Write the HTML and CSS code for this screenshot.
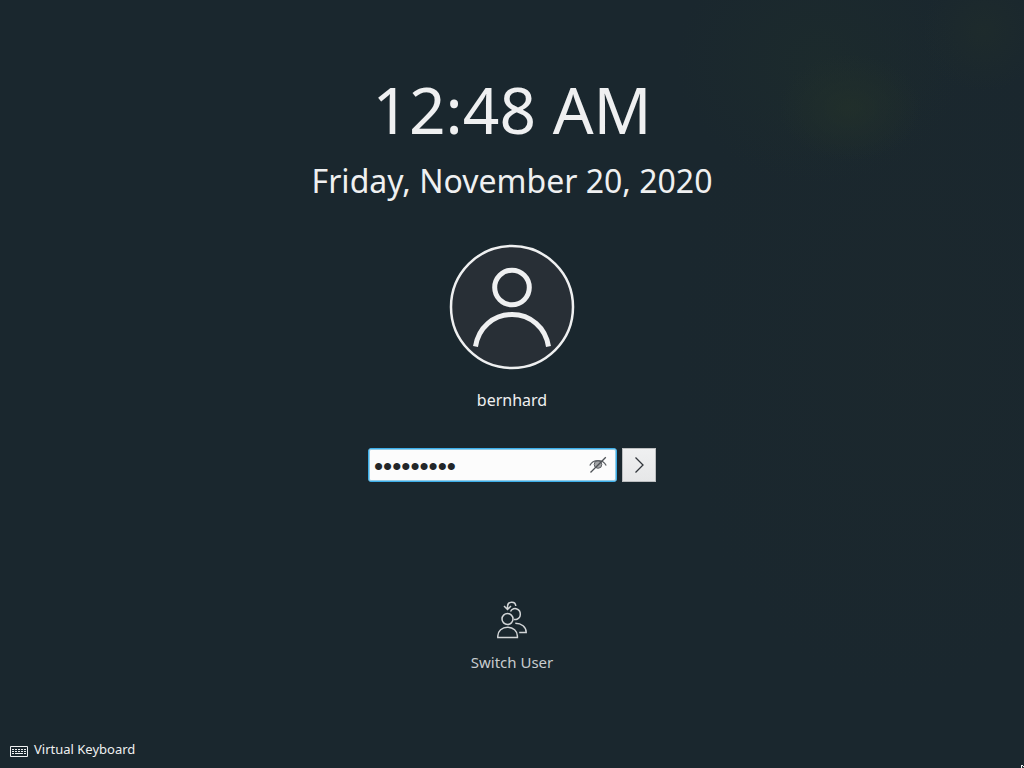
FILE: index.html
```html
<!DOCTYPE html>
<html lang="en">
<head>
<meta charset="utf-8">
<title>Lock Screen</title>
<meta name="viewport" content="width=device-width, initial-scale=1">
<link rel="stylesheet" href="styles.css">
</head>
<body>
<div class="screen">
  <main class="content">
    <header class="clock">
      <h1 class="time">12:48 AM</h1>
      <p class="date">Friday, November 20, 2020</p>
    </header>
    <section class="user">
      <svg class="avatar" viewBox="0 0 126 126" fill="none" stroke="#eff0f1" aria-hidden="true">
        <circle cx="63" cy="63" r="61" fill="#282f36" stroke-width="2.5"/>
        <circle cx="63" cy="43.500" r="17.300" stroke-width="5"/>
        <path d="M26.500 102.500C29.500 83.500 44.500 70.500 63 70.500s33.500 13 36.500 32" stroke-width="5"/>
      </svg>
      <label class="name" for="password">bernhard</label>
    </section>
    <form class="login">
      <div class="field">
        <input class="password" id="password" type="password" value="password1">
        <button class="reveal" type="button" aria-label="Show password">
          <svg class="eye" viewBox="0 0 18 18" fill="none" aria-hidden="true">
            <circle cx="9" cy="8.500" r="3.800" fill="#a3a5a7" stroke="#5c6064"/>
            <path d="M.8 9.500C2.500 6.300 5.500 4.700 9 4.700s6.500 1.600 8.200 4.800" stroke="#5c6064" stroke-width="1.300"/>
            <path d="M1.500 16.500 16.800 1.200" stroke="#4d5155" stroke-width="1.300"/>
          </svg>
        </button>
      </div>
      <button class="unlock" type="button" aria-label="Unlock">
        <svg class="chevron" viewBox="0 0 20 20" fill="none" stroke="#31363b" stroke-width="1.300" aria-hidden="true">
          <path d="M6.500 2.500 14 10l-7.500 7.500"/>
        </svg>
      </button>
    </form>
    <button class="switch" type="button">
      <svg class="people" viewBox="0 0 32 38" fill="none" stroke="#d2d5d7" stroke-width="1.500" aria-hidden="true">
        <circle cx="11.500" cy="18" r="5.500"/>
        <path d="M1.800 36.500v-1.500c0-5 4.200-8.800 9.800-8.800s9.800 3.800 9.800 8.800v1.500z"/>
        <path d="M14.500 10.500C16 7.500 19 7 21 8c4.500 2 4.300 8.500 0 10.200-1 .4-2 .5-3.200.2"/>
        <path d="M19.300 22.200c6.200 0 10.900 3.800 10.900 9.200h-7"/>
        <path d="M19.800 5c-.5-5.200-8.300-4.700-8.300.5v2.800M8 5l3.500 3.500L15 5"/>
      </svg>
      <span>Switch User</span>
    </button>
  </main>
  <footer class="footer">
    <button class="keyboard" type="button">
      <svg class="keys" viewBox="0 0 18 12" fill="none" stroke="#eff0f1" aria-hidden="true">
        <path d="M.5.500h17v10H.5z"/>
        <path d="M2 3.500h14M2 5.500h14" stroke-dasharray="2 1"/>
        <path d="M2 7.500h2M5 7.500h8M14 7.500h2"/>
      </svg>
      <span>Virtual Keyboard</span>
    </button>
  </footer>
  <svg class="pointer" viewBox="0 0 3 3" aria-hidden="true">
    <path d="M0 0h2v1h1v2H0z" fill="#eff0f1"/><path d="M1 1h1v1h1v1H1z" fill="#31363b"/>
  </svg>
</div>
</body>
</html>
```
FILE: styles.css
```css
* {
  box-sizing: border-box;
}

body {
  margin: 0;
  font-family: "Noto Sans", sans-serif;
  color: #eff0f1;
  background-color: #1a272e;
}

button {
  margin: 0;
  padding: 0;
  border: 0;
  background: none;
  color: inherit;
  font-family: inherit;
}

svg {
  display: block;
}

.screen {
  position: relative;
  display: flex;
  flex-direction: column;
  min-height: 100vh;
  background-image:
    radial-gradient(ellipse 7% 7% at 83% 14%, rgba(35, 49, 42, 0.7), transparent),
    radial-gradient(ellipse 14% 16% at 80% 8%, rgba(29, 44, 44, 0.7), transparent),
    radial-gradient(ellipse 6% 8% at 96% 4%, rgba(31, 44, 43, 0.7), transparent),
    radial-gradient(ellipse 22% 45% at 88% 46%, rgba(28, 40, 45, 0.7), transparent);
}

.content {
  display: flex;
  flex-direction: column;
  align-items: center;
  padding-top: 66px;
}

.clock {
  display: flex;
  flex-direction: column;
  gap: 6px;
  text-align: center;
}

.time,
.date {
  margin: 0;
  font-weight: 400;
}

.time {
  font-size: 64px;
  line-height: 87px;
}

.date {
  font-size: 32px;
  line-height: 44px;
}

.user {
  display: flex;
  flex-direction: column;
  align-items: center;
  gap: 19px;
  margin-top: 41px;
}

.avatar {
  width: 126px;
  height: 126px;
}

.name {
  font-size: 16px;
  line-height: 22px;
}

.login {
  display: flex;
  gap: 5px;
  margin-top: 37px;
}

.field {
  display: flex;
  align-items: center;
  width: 249px;
  height: 34px;
  padding-right: 9px;
  border: 1px solid #3daee9;
  border-radius: 3px;
  background: #fcfcfc;
  box-shadow: inset 0 0 0 1px #93cee9;
}

.password {
  flex: 1;
  min-width: 0;
  height: 32px;
  padding: 2px 0 0 5px;
  border: 0;
  outline: 0;
  background: none;
  color: #232629;
  font-family: "Liberation Sans", sans-serif;
  font-size: 26px;
}

.eye {
  width: 18px;
  height: 18px;
}

.unlock {
  display: grid;
  place-items: center;
  width: 34px;
  height: 34px;
  border: 1px solid #bcbec0;
  background: linear-gradient(#eff0f1, #e6e7e8);
}

.chevron {
  width: 20px;
  height: 20px;
}

.switch {
  display: flex;
  flex-direction: column;
  align-items: center;
  gap: 13px;
  margin-top: 119px;
  color: #c8cccf;
  font-size: 15px;
  line-height: 20px;
}

.people {
  width: 32px;
  height: 38px;
}

.footer {
  margin-top: auto;
  padding: 0 10px 10px;
}

.keyboard {
  display: flex;
  align-items: flex-end;
  gap: 6px;
  font-size: 13px;
  line-height: 18px;
}

.keys {
  width: 18px;
  height: 12px;
}

.pointer {
  position: absolute;
  right: 0;
  bottom: 0;
  width: 3px;
  height: 3px;
}
```
